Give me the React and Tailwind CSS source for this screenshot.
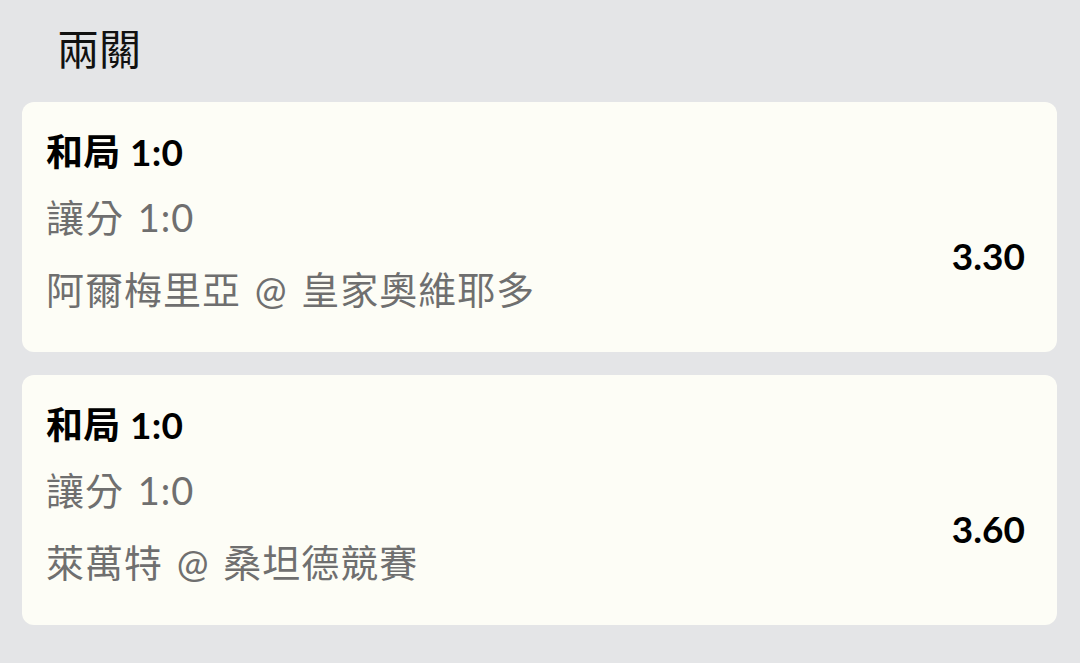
const bets = [
  { title: "和局 1:0", line: "讓分 1:0", match: "阿爾梅里亞 @ 皇家奧維耶多", odds: "3.30" },
  { title: "和局 1:0", line: "讓分 1:0", match: "萊萬特 @ 桑坦德競賽", odds: "3.60" },
];

const font = { fontFamily: 'Lato, "Noto Sans CJK TC", sans-serif' };

function BetCard({ bet }) {
  return (
    <div className="bg-[#fdfdf6] rounded-[12px] h-[250px] pl-6 pr-8 pt-[26px]">
      <div className="text-[37px] leading-[48px] font-bold text-black tracking-[0.3px]">{bet.title}</div>
      <div className="flex items-center justify-between">
        <div className="flex flex-col text-[38px] text-[#6f6f6f] tracking-[1px] [word-spacing:3px]">
          <div className="leading-[48px] mt-[17px]">{bet.line}</div>
          <div className="leading-[48px] mt-[24px]">{bet.match}</div>
        </div>
        <div className="text-[37px] font-bold text-black mt-[22px]">{bet.odds}</div>
      </div>
    </div>
  );
}

export default function App() {
  return (
    <main className="min-h-screen w-[1080px] h-[663px] bg-[#e4e5e7] overflow-hidden" style={font}>
      <h1 className="text-[42px] leading-[56px] font-normal text-[#111] pl-[57px] pt-[21px]">兩關</h1>
      <div className="flex flex-col gap-[23px] px-[22px] mt-[25px] pr-[23px]">
        {bets.map((bet, i) => (
          <BetCard key={i} bet={bet} />
        ))}
      </div>
    </main>
  );
}
